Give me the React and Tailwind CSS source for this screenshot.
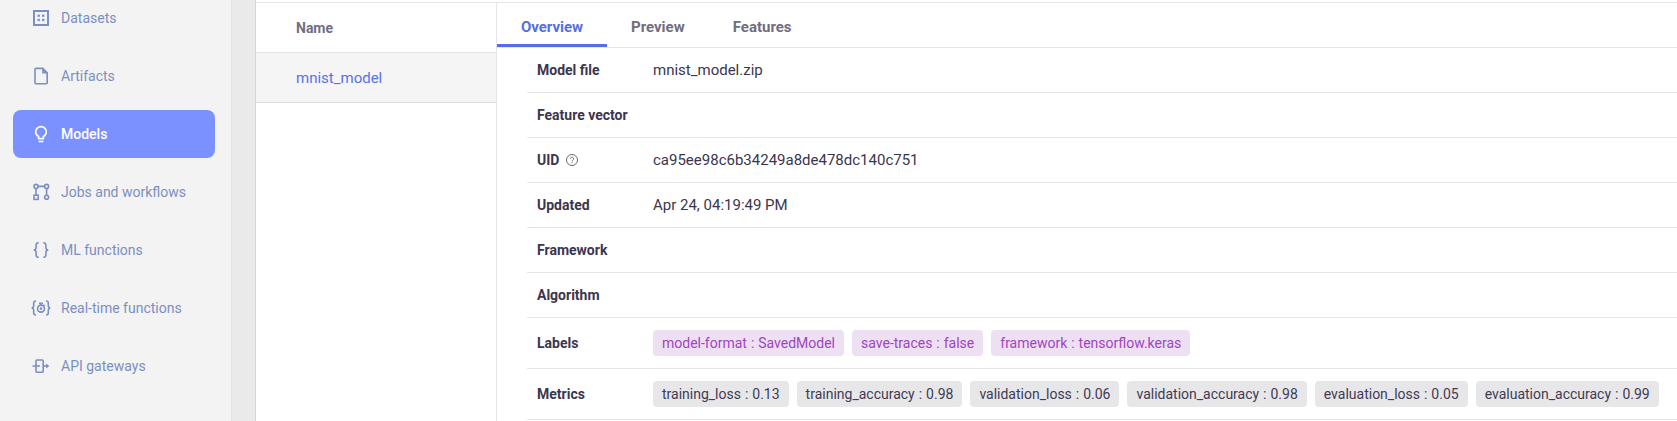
const iconProps = {
  width: 22,
  height: 22,
  viewBox: '0 0 22 22',
  fill: 'none',
  stroke: 'currentColor',
  strokeWidth: 1.6,
  className: 'shrink-0',
}

const DatasetsIcon = () => (
  <svg {...iconProps}>
    <rect x="4" y="4" width="14" height="14" strokeWidth="2" />
    <g fill="currentColor" stroke="none">
      <rect x="7.5" y="7.6" width="2.4" height="2.2" />
      <rect x="12" y="7.6" width="2.4" height="2.2" />
      <rect x="7.5" y="11.8" width="2.4" height="2.2" />
      <rect x="12" y="11.8" width="2.4" height="2.2" />
    </g>
  </svg>
)

const ArtifactsIcon = () => (
  <svg {...iconProps}>
    <path d="M6 3.4h6.800l4.400 4.400v10a1 1 0 0 1-1 1H6a1 1 0 0 1-1-1V4.400a1 1 0 0 1 1-1z" />
    <path d="M12.200 3.200V8.400h5.200z" fill="currentColor" stroke="none" />
  </svg>
)

const ModelsIcon = () => (
  <svg {...iconProps}>
    <path d="M8.600 15.600v-2.100c-1.700-1-2.900-2.600-2.900-4.600a5.300 5.300 0 0 1 10.600 0c0 2-1.200 3.600-2.900 4.600v2.100z" />
    <path d="M8.600 18.500h4.800" />
  </svg>
)

const JobsIcon = () => (
  <svg {...iconProps}>
    <circle cx="6" cy="5.400" r="2" />
    <circle cx="16.600" cy="5.400" r="2" />
    <circle cx="16.600" cy="16.300" r="2" />
    <rect x="4" y="14.200" width="4.200" height="4.200" />
    <path d="M8 5.400h6.600M6 7.400v6.800M16.600 7.400v6.900" />
  </svg>
)

const MlIcon = () => (
  <svg {...iconProps}>
    <path d="M8.700 3.800c-2 0-2.600.6-2.600 2.300v2.300c0 1.500-.6 2.400-2.300 2.600 1.700.2 2.300 1.100 2.300 2.600v2.300c0 1.700.6 2.300 2.600 2.300" />
    <path d="M13.300 3.800c2 0 2.600.6 2.600 2.300v2.300c0 1.500.6 2.400 2.300 2.600-1.700.2-2.300 1.100-2.300 2.600v2.300c0 1.700-.6 2.300-2.600 2.300" />
  </svg>
)

const RealTimeIcon = () => (
  <svg {...iconProps}>
    <path d="M6 4c-1.800 0-2.300.6-2.300 2v2.500c0 1.500-.5 2.300-2 2.500 1.500.2 2 1 2 2.500V16c0 1.400.5 2 2.300 2" />
    <path d="M16 4c1.800 0 2.300.6 2.300 2v2.500c0 1.500.5 2.300 2 2.500-1.500.2-2 1-2 2.500V16c0 1.400-.5 2-2.300 2" />
    <circle cx="11" cy="11.600" r="3.500" />
    <path d="M9 6.200h4M11 6v2M13.600 8.800l1-1" />
    <circle cx="11" cy="11.600" r="1.300" fill="currentColor" stroke="none" />
  </svg>
)

const GatewayIcon = () => (
  <svg {...iconProps}>
    <rect x="6" y="5" width="7.200" height="12.200" rx="1" />
    <path d="M2.500 11h7.500M13.200 11h4" />
    <path d="M16.200 8.400v5.200l3.100-2.600z" fill="currentColor" stroke="none" />
  </svg>
)

const HelpIcon = () => (
  <svg width="12" height="12" viewBox="0 0 12 12" fill="none" stroke="#6b6776" strokeWidth="1">
    <circle cx="6" cy="6" r="5.500" />
    <path d="M4.400 4.800a1.600 1.600 0 1 1 2.500 1.300c-.6.4-.9.600-.9 1.200M6 8.200v1" />
  </svg>
)

const NAV = [
  { label: 'Datasets', Icon: DatasetsIcon },
  { label: 'Artifacts', Icon: ArtifactsIcon },
  { label: 'Models', Icon: ModelsIcon, active: true },
  { label: 'Jobs and workflows', Icon: JobsIcon },
  { label: 'ML functions', Icon: MlIcon },
  { label: 'Real-time functions', Icon: RealTimeIcon },
  { label: 'API gateways', Icon: GatewayIcon },
]

const DETAILS = [
  { label: 'Model file', value: 'mnist_model.zip' },
  { label: 'Feature vector' },
  { label: 'UID', help: true, value: 'ca95ee98c6b34249a8de478dc140c751' },
  { label: 'Updated', value: 'Apr 24, 04:19:49 PM' },
  { label: 'Framework' },
  { label: 'Algorithm' },
]

const LABELS = ['model-format : SavedModel', 'save-traces : false', 'framework : tensorflow.keras']

const METRICS = [
  'training_loss : 0.13',
  'training_accuracy : 0.98',
  'validation_loss : 0.06',
  'validation_accuracy : 0.98',
  'evaluation_loss : 0.05',
  'evaluation_accuracy : 0.99',
]

function Sidebar() {
  return (
    <nav className="flex w-[231px] shrink-0 flex-col justify-end gap-2.5 bg-[#f3f3f3] pr-4 pb-[31px] pl-[13px]">
      {NAV.map(({ label, Icon, active }) => (
        <a
          key={label}
          className={
            active
              ? 'flex h-12 shrink-0 items-center gap-[9px] rounded-lg bg-[#7b91ff] pl-[17px] text-sm font-medium text-white'
              : 'flex h-12 shrink-0 items-center gap-[9px] rounded-lg pl-[17px] text-sm text-[#7b8fc2]'
          }
        >
          <Icon />
          <span>{label}</span>
        </a>
      ))}
    </nav>
  )
}

function ChipRow({ label, chips, chipClass }) {
  return (
    <div className="flex h-[51px] items-center border-b border-[#e5e5e7] pl-2.5">
      <div className="w-[116px] shrink-0 text-sm font-bold">{label}</div>
      <div className="flex gap-2">
        {chips.map((chip) => (
          <span key={chip} className={chipClass}>
            {chip}
          </span>
        ))}
      </div>
    </div>
  )
}

export default function App() {
  return (
    <div className="flex h-[421px] w-[1677px] overflow-hidden bg-white font-['Roboto',sans-serif] text-[#3b364d]">
      <Sidebar />
      <div className="w-[25px] shrink-0 border-r border-[#d6d6d6] border-l border-l-[#e5e5e5] bg-[#eaeaea]" />
      <main className="flex min-w-0 grow flex-col pt-0.5">
        <div className="flex grow border-t border-[#e5e5e7]">
          <section className="w-[241px] shrink-0 border-r border-[#e5e5e7]">
            <div className="flex h-[50px] items-center border-b border-[#e5e5e7] pl-10 text-sm font-bold text-[#716d7d]">
              Name
            </div>
            <div className="flex h-[50px] items-center border-b border-[#dedee0] bg-[#f5f5f5] pt-0.5 pl-10 text-[15px] text-[#5871eb]">
              mnist_model
            </div>
          </section>
          <section className="flex min-w-0 grow flex-col">
            <div className="flex h-[45px] border-b border-[#e5e5e7] text-[15px] font-bold text-[#716d7d]">
              <div className="flex w-[110px] items-center justify-center border-b-3 border-[#546fe5] pt-[7px] text-[#546fe5]">
                Overview
              </div>
              <div className="flex items-center px-6 pt-1">Preview</div>
              <div className="flex items-center px-6 pt-1">Features</div>
            </div>
            <div className="pl-[30px]">
              {DETAILS.map(({ label, value, help }) => (
                <div key={label} className="flex h-[45px] items-center border-b border-[#e5e5e7] pl-2.5">
                  <div className="flex w-[116px] shrink-0 items-center gap-[7px] text-sm font-bold">
                    {label}
                    {help && <HelpIcon />}
                  </div>
                  <div className="text-[15px]">{value}</div>
                </div>
              ))}
              <ChipRow
                label="Labels"
                chips={LABELS}
                chipClass="flex h-[26px] items-center rounded bg-[#eee0f3] px-[9px] text-sm [word-spacing:0.5px] whitespace-nowrap text-[#a044c0]"
              />
              <ChipRow
                label="Metrics"
                chips={METRICS}
                chipClass="flex h-[26px] items-center rounded bg-[#e7e7ea] px-[9px] text-sm [word-spacing:0.5px] whitespace-nowrap text-[#3f3b52]"
              />
            </div>
          </section>
        </div>
      </main>
    </div>
  )
}
